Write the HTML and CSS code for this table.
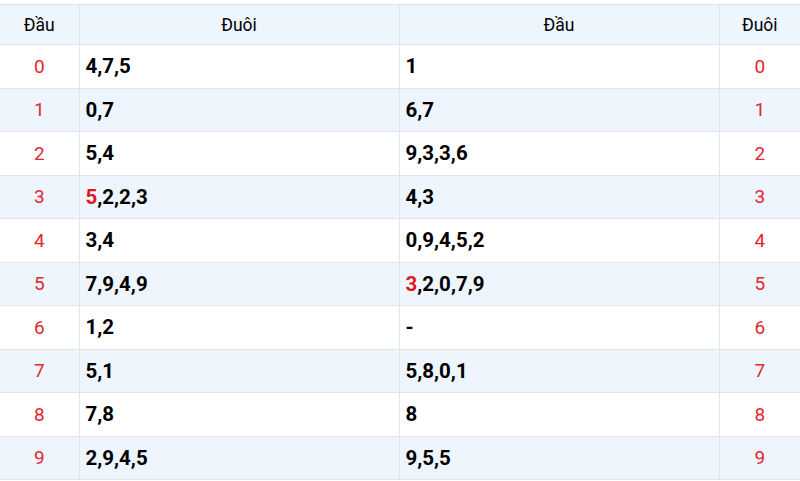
FILE: index.html
```html
<!DOCTYPE html>
<html>
<head>
<meta charset="utf-8">
<link rel="stylesheet" href="styles.css">
</head>
<body>
<table class="loto">
  <colgroup>
    <col class="c-num"><col class="c-list"><col class="c-list"><col class="c-num2">
  </colgroup>
  <thead>
    <tr><th>Đầu</th><th>Đuôi</th><th>Đầu</th><th>Đuôi</th></tr>
  </thead>
  <tbody>
    <tr><td class="num">0</td><td class="list">4,7,5</td><td class="list">1</td><td class="num">0</td></tr>
    <tr><td class="num">1</td><td class="list">0,7</td><td class="list">6,7</td><td class="num">1</td></tr>
    <tr><td class="num">2</td><td class="list">5,4</td><td class="list">9,3,3,6</td><td class="num">2</td></tr>
    <tr><td class="num">3</td><td class="list"><span class="hl">5</span>,2,2,3</td><td class="list">4,3</td><td class="num">3</td></tr>
    <tr><td class="num">4</td><td class="list">3,4</td><td class="list">0,9,4,5,2</td><td class="num">4</td></tr>
    <tr><td class="num">5</td><td class="list">7,9,4,9</td><td class="list"><span class="hl">3</span>,2,0,7,9</td><td class="num">5</td></tr>
    <tr><td class="num">6</td><td class="list">1,2</td><td class="list">-</td><td class="num">6</td></tr>
    <tr><td class="num">7</td><td class="list">5,1</td><td class="list">5,8,0,1</td><td class="num">7</td></tr>
    <tr><td class="num">8</td><td class="list">7,8</td><td class="list">8</td><td class="num">8</td></tr>
    <tr><td class="num">9</td><td class="list">2,9,4,5</td><td class="list">9,5,5</td><td class="num">9</td></tr>
  </tbody>
</table>
</body>
</html>
```
FILE: styles.css
```css
html, body {
  margin: 0;
  padding: 0;
  background: #ffffff;
}
body {
  padding-top: 4px;
  font-family: Roboto, "Liberation Sans", Arial, sans-serif;
}
.loto {
  width: 800px;
  border-collapse: collapse;
  table-layout: fixed;
  border-top: 1px solid #e3e7ec;
}
.c-num { width: 79px; }
.c-list { width: 320px; }
.c-num2 { width: 81px; }
.loto th, .loto td {
  border: 1px solid #dfe5ec;
  padding: 0 6px;
  overflow: hidden;
  white-space: nowrap;
}
.loto tr > :first-child { border-left: none; }
.loto tr > :last-child { border-right: none; }
.loto th {
  height: 39px;
  background: #edf5fd;
  font-weight: 400;
  font-size: 17.5px;
  color: #000;
  text-align: center;
}
.loto td {
  height: 42.5px;
}
.loto tbody tr:nth-child(even) td { background: #eef5fd; }
.num {
  text-align: center;
  color: #e3262f;
  font-size: 19px;
}
.list {
  font-weight: 700;
  font-size: 20.5px;
  color: #000;
}
.hl { color: #e3161f; }
```
